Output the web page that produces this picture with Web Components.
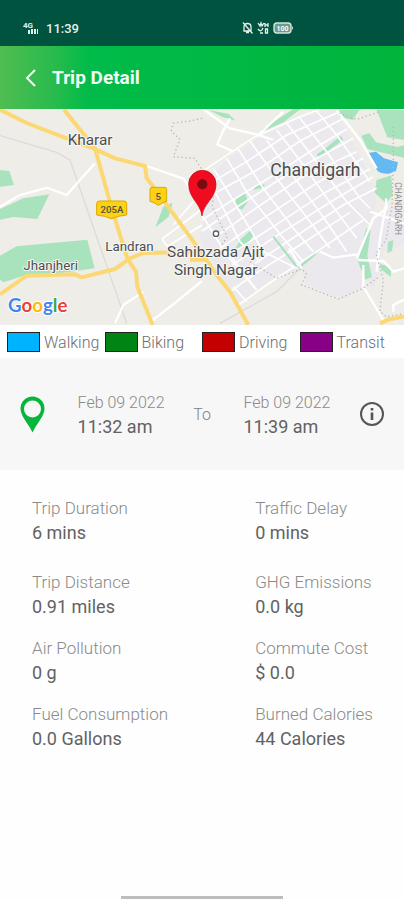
<!DOCTYPE html>
<html lang="en">
<head>
<meta charset="utf-8">
<meta name="viewport" content="width=device-width, initial-scale=1">
<title>Trip Detail</title>
<style>
body {
    margin: 0;
    background: #fefefe;
    font-family: Roboto, "Liberation Sans", sans-serif;
}
</style>
</head>
<body>
<trip-page>
    <status-bar slot="top" time="11:39"></status-bar>
    <app-header slot="top">Trip Detail</app-header>
    <trip-map></trip-map>
    <mode-legend>
        <mode-item color="#00b3ff">Walking</mode-item>
        <mode-item color="#008414">Biking</mode-item>
        <mode-item color="#c40000">Driving</mode-item>
        <mode-item color="#880085">Transit</mode-item>
    </mode-legend>
    <trip-period>
        <trip-stop slot="from" date="Feb 09 2022" time="11:32 am"></trip-stop>
        <trip-stop slot="to" date="Feb 09 2022" time="11:39 am"></trip-stop>
    </trip-period>
    <trip-stats></trip-stats>
</trip-page>

<script>
class TripPage extends HTMLElement {
    constructor() {
        super();
        this.attachShadow({mode: "open"}).innerHTML = `
            <style>
            :host {
                display: flex;
                flex-direction: column;
                min-height: 100vh;
            }
            main {
                flex: 1;
            }
            .home {
                width: 40%;
                height: 3px;
                margin: 0 auto 1px;
                background: #bdbdbd;
            }
            </style>
            <slot name="top"></slot>
            <main><slot></slot></main>
            <div class="home"></div>`;
    }
}
customElements.define("trip-page", TripPage);

class StatusBar extends HTMLElement {
    constructor() {
        super();
        this.attachShadow({mode: "open"});
    }

    connectedCallback() {
        this.shadowRoot.innerHTML = `
            <style>
            :host {
                display: flex;
                align-items: center;
                box-sizing: border-box;
                height: 46px;
                padding: 10px 110px 0 23px;
                background: #00543f;
                color: #e6f0ec;
            }
            .time {
                flex: 1;
                margin-left: 6px;
                font-size: 13px;
                font-weight: 500;
            }
            svg {
                display: block;
            }
            .icons {
                display: flex;
                gap: 4px;
            }
            </style>
            <svg width="17" height="14" viewBox="0 0 17 14" fill="currentColor">
                <text x="0" y="7" font-size="8" font-weight="700">4G</text>
                <path d="M5 9h2v4H5zM8 8h2v5H8zM11 8h2v5h-2zM14 8h1v5h-1z"/>
            </svg>
            <span class="time">${this.getAttribute("time")}</span>
            <div class="icons">
                <svg width="11" height="14" viewBox="0 0 11 14" fill="none" stroke="currentColor" stroke-width="1.3">
                    <path d="M2 10V6q0-3.500 3.500-3.500T9 6v4zM4 11.500h3M1 1.500l9.500 11"/>
                </svg>
                <svg width="12" height="14" viewBox="0 0 12 14" fill="none" stroke="currentColor" stroke-width="1.3">
                    <path d="M1 2l2 3 1-3 1 3 2-3M1 8q3 4 5-1M3 12h3M8 2v4M11 2v4M8 4h3M8.500 8h2v4h-2z"/>
                </svg>
                <svg width="21" height="14" viewBox="0 0 21 14">
                    <rect x="1" y="2" width="17" height="10" rx="3" fill="#6b9b8d" stroke="#d5e5df" stroke-width="1.4"/>
                    <path d="M19 5q2 2 0 4z" fill="#d5e5df"/>
                    <text x="9.500" y="9.500" font-size="7" font-weight="700" text-anchor="middle" fill="#fff">100</text>
                </svg>
            </div>`;
    }
}
customElements.define("status-bar", StatusBar);

class AppHeader extends HTMLElement {
    constructor() {
        super();
        this.attachShadow({mode: "open"}).innerHTML = `
            <style>
            :host {
                display: block;
                background: linear-gradient(90deg, #50bd52 0, #26bb4c 14%, #00bb4a 22%, #00b43c 100%);
                color: #f0fff3;
            }
            header {
                display: flex;
                align-items: center;
                gap: 12px;
                height: 63px;
                padding: 0 20px;
            }
            button {
                display: block;
                padding: 0;
                border: 0;
                background: none;
                color: inherit;
            }
            svg {
                display: block;
            }
            h1 {
                margin: 0;
                font-size: 19px;
                font-weight: 700;
            }
            </style>
            <header>
                <button type="button" aria-label="Back">
                    <svg width="20" height="20" viewBox="0 0 20 20" fill="none" stroke="currentColor" stroke-width="2">
                        <path d="M15 2L7 10l8 8"/>
                    </svg>
                </button>
                <h1><slot></slot></h1>
            </header>`;
    }
}
customElements.define("app-header", AppHeader);

class TripMap extends HTMLElement {
    constructor() {
        super();
        this.attachShadow({mode: "open"}).innerHTML = `
            <style>
            :host {
                display: block;
                background: #efede8;
            }
            svg {
                display: block;
                width: 100%;
                height: 216px;
            }
            .park { fill: #a9e3bd; }
            .street { fill: none; stroke: #fff; stroke-width: 5; }
            .wide { fill: none; stroke: #fff; stroke-width: 7; }
            .road { fill: none; stroke: #fbd873; stroke-width: 12; stroke-linejoin: round; }
            .border { fill: none; stroke: #b9b7b9; stroke-width: 4; stroke-dasharray: 4 8; }
            .rail { fill: none; stroke: #dcdbdb; stroke-width: 4; }
            .name { fill: #4a4e51; stroke: #f7f6f4; stroke-width: 6; paint-order: stroke; stroke-linejoin: round; }
            .shield { fill: #fcd116; stroke: #dba900; stroke-width: 3; }
            </style>
            <svg viewBox="0 12 1212 648" preserveAspectRatio="xMidYMid slice" role="img" aria-label="Trip map">
                <!-- city area -->
                <path fill="#ebe9ed" d="M700 150L850 50 1000 12 1030 60 1100 190 1130 290 1110 350 1090 480 1085 545 1030 580 920 540 905 490 830 510 715 600 690 560 600 400 640 200z"/>
                <path fill="#ebe9ed" d="M1130 330L1212 290V420L1150 440 1120 560 1080 470z"/>

                <!-- parks -->
                <g class="park">
                    <path d="M0 195l28 3 14 42-42 5z"/>
                    <path d="M0 312L70 280 148 268 112 342 40 336 0 344z"/>
                    <path d="M0 452L50 424 262 404 284 490 180 505 70 512 12 532 0 525z"/>
                    <path d="M490 305l28-12-12 42-40 32z"/>
                    <path d="M626 15l60 12 20 20-40-12z"/>
                    <path d="M784 75L880 12h22L850 52 796 76z"/>
                    <path d="M950 148l24-16 48-40 8 12-30 22-44 34z"/>
                    <path d="M1018 15h60l-20 30-40-10zM1130 15h82v90l-50-8-18-46z"/>
                    <path d="M1084 92l24-8 20 28 64 14 20-6v38l-110-26z"/>
                    <path d="M1130 225l44-14 4 60-20 24-34-32z"/>
                    <path d="M708 280l26-18 10 28-18 24-20-8z"/>
                    <path d="M764 242l30-4-4 10-28 6z"/>
                    <path d="M720 404l34-30 8 14-24 36-32 8z"/>
                    <path d="M892 488l50-46 8 6-48 40z"/>
                    <path d="M1098 370l14 6-10 76 14 64-20 8-22-54z"/>
                    <path d="M1164 410l16-4-4 32-14 6zM1140 476l34 12-2 28-30-24z"/>
                </g>
                <path fill="#64b9f3" d="M1104 144l24-4 24 20 42 12-6 26-22 8q-30 0-36-12z"/>

                <path class="rail" d="M0 92L170 142 210 165 380 655M660 655L830 560 900 490"/>

                <!-- sector grid of Chandigarh -->
                <g class="street">
                    <path d="M606 200L760 98 890 40 960 12"/>
                    <path d="M630 235L740 170 860 90 1010 24"/>
                    <path d="M650 262L780 190 900 108 1028 42"/>
                    <path d="M606 345L690 290 830 205 960 120 1040 72"/>
                    <path d="M606 378L720 300 860 210 1060 100"/>
                    <path d="M640 400L750 322 900 220 1070 140"/>
                    <path d="M660 430L790 340 950 234 1090 160"/>
                    <path d="M690 448L830 358 980 260 1110 192"/>
                    <path d="M696 480L850 380 1010 280 1118 216"/>
                    <path d="M720 505L870 405 1030 300 1130 250"/>
                    <path d="M690 560L760 510 900 420 1050 322"/>
                    <path d="M715 600L800 540 950 440 1090 345"/>
                    <path d="M640 190L690 270 790 440 890 490"/>
                    <path d="M680 160L740 260 850 400 910 470"/>
                    <path d="M712 128L790 250 880 370 940 440"/>
                    <path d="M750 108L830 220 930 350 990 430"/>
                    <path d="M800 105L870 200 980 350 1040 440"/>
                    <path d="M830 75L910 180 1010 320 1070 400"/>
                    <path d="M860 55L950 170 1040 290 1110 360"/>
                    <path d="M900 40L980 140 1080 280 1110 310"/>
                    <path d="M950 18L1010 90 1110 230"/>
                    <path d="M610 230L650 270 720 410 780 470M606 330L680 450 770 555M690 450l80 105M700 545l40 45"/>
                    <path d="M486 402L606 312M500 425L606 360M520 360L580 290M486 402l22 30"/>
                </g>
                <g class="wide">
                    <path d="M0 305L60 270 142 248 200 270 240 225 285 175M440 183L552 222 580 270M345 655L370 600 430 560M455 648L530 590 606 528"/>
                    <path d="M606 10L690 70 770 88 820 105M690 40L668 80 652 118 700 140M775 90L850 20"/>
                    <path d="M1010 15L1080 105 1130 190M1070 460L1120 340 1160 310 1158 280M1090 480L1090 545 1150 645M1110 320L1212 355M1075 465L1150 468 1180 500 1212 490M905 490l-38-60M960 440l40 18 70-10"/>
                    <path d="M1158 300L1140 400 1130 500M1180 620v-20l32-16"/>
                </g>
                <path fill="none" stroke="#a9dfbf" stroke-width="6" d="M820 395L890 485"/>

                <path class="border" d="M606 40L570 48 520 54 514 78 540 104 520 155 585 160 606 195M640 275l-4 30 30 60 16 30-20 30M750 470l80 50 75-28 14 14-14 34 110 42 70-30 50-35M1018 24l52 20 70-25M1180 65v110l-4 130-18 100-30 40 22 80-10 95 20 16 50-10"/>

                <g class="road">
                    <path d="M0 14L80 54 200 100 280 130 345 160 435 183 440 220 468 255 606 445 650 510 690 560 745 660"/>
                    <path d="M192 14L285 130 335 310 382 460 408 500 412 545 458 660"/>
                    <path d="M0 568L80 512 225 508 245 517 345 492 390 460 430 444 606 440M570 464h50"/>
                    <path d="M1140 655L1165 644 1212 634"/>
                </g>

                <!-- road shields -->
                <path class="shield" d="M298 288h74q8 0 8 8v34q-24 2-46 11-20-9-44-11v-34q0-8 8-8z"/>
                <path class="shield" d="M456 247h38q6 0 6 6v36q-12 3-25 12-12-9-25-12v-36q0-6 6-6z"/>
                <g fill="#54513a" font-size="29" font-weight="500" text-anchor="middle">
                    <text x="336" y="325">205A</text>
                    <text x="475" y="285">5</text>
                </g>

                <g class="name">
                    <text x="203" y="119" font-size="46">Kharar</text>
                    <text x="316" y="438" font-size="40">Landran</text>
                    <text x="70" y="495" font-size="40">Jhanjheri</text>
                    <text x="811" y="212" font-size="53">Chandigarh</text>
                    <text x="647" y="455" font-size="46" text-anchor="middle">Sahibzada Ajit</text>
                    <text x="647" y="511" font-size="46" text-anchor="middle">Singh Nagar</text>
                </g>
                <text transform="translate(1186 232) rotate(90)" font-size="25" fill="#8d8a8f">CHANDIGARH</text>
                <circle cx="648" cy="386" r="8" fill="#fff" stroke="#5c5f61" stroke-width="4"/>

                <!-- trip marker -->
                <path fill="#f00b1e" stroke="#c40015" stroke-width="2" d="M606 333C602 295 566 280 566 237a41 41 0 0 1 82 0C648 280 610 295 606 333z"/>
                <circle cx="607" cy="238" r="15" fill="#760b12"/>

                <text x="24" y="621" font-size="56" font-weight="700" font-family="Lato, Roboto, sans-serif" stroke="#fff" stroke-width="6" paint-order="stroke"><tspan fill="#4285f4">G</tspan><tspan fill="#ea4335">o</tspan><tspan fill="#fbbc05">o</tspan><tspan fill="#4285f4">g</tspan><tspan fill="#34a853">l</tspan><tspan fill="#ea4335">e</tspan></text>
            </svg>`;
    }
}
customElements.define("trip-map", TripMap);

class ModeLegend extends HTMLElement {
    constructor() {
        super();
        this.attachShadow({mode: "open"}).innerHTML = `
            <style>
            :host {
                display: grid;
                grid-template-columns: repeat(4, 1fr);
                align-items: center;
                height: 33px;
                padding: 0 7px;
                background: #fff;
            }
            </style>
            <slot></slot>`;
    }
}
customElements.define("mode-legend", ModeLegend);

class ModeItem extends HTMLElement {
    constructor() {
        super();
        this.attachShadow({mode: "open"});
    }

    connectedCallback() {
        this.shadowRoot.innerHTML = `
            <style>
            :host {
                display: flex;
                align-items: center;
                gap: 4px;
                color: #6e6e6e;
                font-size: 16px;
                font-weight: 300;
                line-height: 24px;
            }
            .swatch {
                box-sizing: border-box;
                width: 33px;
                height: 20px;
                border: 1px solid #222;
                background: ${this.getAttribute("color")};
            }
            .label {
                padding-top: 3px;
            }
            </style>
            <span class="swatch"></span>
            <span class="label"><slot></slot></span>`;
    }
}
customElements.define("mode-item", ModeItem);

class TripPeriod extends HTMLElement {
    constructor() {
        super();
        this.attachShadow({mode: "open"}).innerHTML = `
            <style>
            :host {
                display: flex;
                align-items: center;
                justify-content: space-between;
                box-sizing: border-box;
                height: 112px;
                padding: 0 19px 0 20px;
                background: #f7f7f7;
            }
            svg {
                display: block;
            }
            .sep {
                color: #808080;
                font-size: 16px;
                font-weight: 300;
            }
            button {
                padding: 0;
                border: 0;
                background: none;
                color: #555;
            }
            </style>
            <svg width="25" height="37" viewBox="0 0 25 37">
                <path fill="#05b53c" fill-rule="evenodd" d="M12.500 0.500A12 12 0 0 0 0.500 12.500C0.500 20 8 27 12.500 36.500 17 27 24.500 20 24.500 12.500A12 12 0 0 0 12.500 0.500zM12.500 4.500a8.500 8.500 0 1 1 0 17 8.500 8.500 0 0 1 0-17z"/>
            </svg>
            <slot name="from"></slot>
            <span class="sep">To</span>
            <slot name="to"></slot>
            <button type="button" aria-label="Trip info">
                <svg width="26" height="26" viewBox="0 0 26 26" fill="none" stroke="currentColor" stroke-width="2">
                    <circle cx="13" cy="13" r="11"/>
                    <path stroke-width="2.6" d="M13 11.500v7.500M13 7v2.600"/>
                </svg>
            </button>`;
    }
}
customElements.define("trip-period", TripPeriod);

class TripStop extends HTMLElement {
    constructor() {
        super();
        this.attachShadow({mode: "open"});
    }

    connectedCallback() {
        this.shadowRoot.innerHTML = `
            <style>
            :host {
                display: block;
                padding: 2px 0 0 4px;
                line-height: 24px;
            }
            .date {
                color: #8a8a8a;
                font-size: 16px;
                font-weight: 300;
            }
            .time {
                color: #626262;
                font-size: 18px;
            }
            </style>
            <div class="date">${this.getAttribute("date")}</div>
            <div class="time">${this.getAttribute("time")}</div>`;
    }
}
customElements.define("trip-stop", TripStop);

const stats = [
    ["Trip Duration", "6 mins"],
    ["Traffic Delay", "0 mins"],
    ["Trip Distance", "0.91 miles"],
    ["GHG Emissions", "0.0 kg"],
    ["Air Pollution", "0 g"],
    ["Commute Cost", "$ 0.0"],
    ["Fuel Consumption", "0.0 Gallons"],
    ["Burned Calories", "44 Calories"]
];

class TripStats extends HTMLElement {
    constructor() {
        super();
        this.attachShadow({mode: "open"});
    }

    connectedCallback() {
        this.shadowRoot.innerHTML = `
            <style>
            :host {
                display: block;
            }
            dl {
                display: grid;
                grid-template-columns: 3fr 2fr;
                row-gap: 17px;
                margin: 0;
                padding: 26px 0 20px 32px;
            }
            .stat:nth-child(-n+2) {
                margin-bottom: 8px;
            }
            dt {
                color: #8a8a8a;
                font-size: 17px;
                font-weight: 300;
                line-height: 25px;
            }
            dd {
                margin: 0;
                color: #626262;
                font-size: 18px;
                line-height: 24px;
            }
            </style>
            <dl>
                ${stats.map(([name, value]) => `
                <div class="stat">
                    <dt>${name}</dt>
                    <dd>${value}</dd>
                </div>`).join("")}
            </dl>`;
    }
}
customElements.define("trip-stats", TripStats);
</script>
</body>
</html>
